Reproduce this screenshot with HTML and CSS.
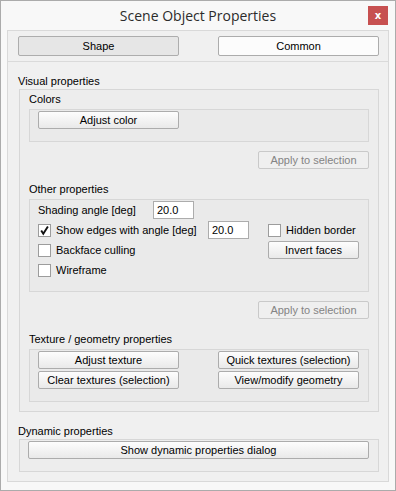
FILE: index.html
```html
<!DOCTYPE html>
<html lang="en">

<head>
    <meta charset="UTF-8">
    <title>Scene Object Properties</title>
    <link rel="stylesheet" href="styles.css">
</head>

<body>
    <div class="window">
        <div class="titlebar">
            <span></span>
            <span class="titlebar__text">Scene Object Properties</span>
            <button class="titlebar__close">x</button>
        </div>
        <div class="client">
            <div class="tabs">
                <button class="btn btn--tab btn--checked">Shape</button>
                <button class="btn btn--tab">Common</button>
            </div>
            <div class="main">
                <div class="caption caption--top">Visual properties</div>
                <div class="group group--visual">
                    <div class="caption caption--first">Colors</div>
                    <div class="group group--inner group--colors">
                        <button class="btn btn--wide">Adjust color</button>
                    </div>
                    <div class="apply-row">
                        <button class="btn btn--apply" disabled>Apply to selection</button>
                    </div>

                    <div class="caption caption--sub">Other properties</div>
                    <div class="group group--inner group--other">
                        <span class="cell cell--label">Shading angle [deg]</span>
                        <input class="field cell--field1" type="text" value="20.0">

                        <label class="check cell--edges"><span class="check__box"><svg width="11" height="11" viewBox="0 0 11 11"><path d="M2.2 5.4 L4.3 8.8 L8.9 1.4" fill="none" stroke="#111" stroke-width="1.9"/></svg></span>Show edges with angle [deg]</label>
                        <input class="field cell--field2" type="text" value="20.0">
                        <label class="check cell--hidden"><span class="check__box"></span>Hidden border</label>

                        <label class="check cell--backface"><span class="check__box"></span>Backface culling</label>
                        <button class="btn btn--invert cell--invert">Invert faces</button>

                        <label class="check cell--wire"><span class="check__box"></span>Wireframe</label>
                    </div>
                    <div class="apply-row">
                        <button class="btn btn--apply" disabled>Apply to selection</button>
                    </div>

                    <div class="caption caption--sub">Texture / geometry properties</div>
                    <div class="group group--inner group--texture">
                        <button class="btn">Adjust texture</button>
                        <button class="btn">Quick textures (selection)</button>
                        <button class="btn">Clear textures (selection)</button>
                        <button class="btn">View/modify geometry</button>
                    </div>
                </div>

                <div class="caption caption--top">Dynamic properties</div>
                <div class="group group--dynamic">
                    <button class="btn btn--full">Show dynamic properties dialog</button>
                </div>
            </div>
        </div>
    </div>
</body>
</html>
```

FILE: styles.css
```css
body {
    margin: 0;
    background-color: #ffffff;
}

.window {
    width: 396px;
    height: 491px;
    box-sizing: border-box;
    border: 1px solid #ababab;
    background-color: #f8f8f8;
    padding: 0 6px 8px 6px;
    display: flex;
    flex-direction: column;
    font-family: 'Liberation Sans', Arial, sans-serif;
    font-size: 11px;
    color: #000000;
}

.titlebar {
    height: 29px;
    flex-shrink: 0;
    display: grid;
    grid-template-columns: 1fr auto 1fr;
    margin: 0 -6px;
}

.titlebar__text {
    font-family: 'Open Sans', 'Noto Sans', sans-serif;
    font-size: 14px;
    line-height: 20px;
    padding-top: 5px;
    color: #2b2b2b;
}

.titlebar__close {
    justify-self: end;
    width: 20px;
    height: 19px;
    margin: 5px 7px 0 0;
    padding: 0;
    border: none;
    background-color: #c75050;
    color: #ffffff;
    font-family: 'DejaVu Sans', sans-serif;
    font-weight: bold;
    font-size: 10px;
    line-height: 17px;
}

.client {
    flex: 1;
    border: 1px solid #d9d9d9;
    background-color: #f0f0f0;
    display: flex;
    flex-direction: column;
}

.tabs {
    display: flex;
    justify-content: space-between;
    padding: 5px 9px 5px 10px;
    border-bottom: 1px solid #dadada;
}

.main {
    padding: 0 9px 0 10px;
}

/* captions above the group boxes */
.caption {
    line-height: 13px;
    box-sizing: border-box;
    padding-top: 1px;
}

.caption--top {
    margin-top: 11px;
    height: 16px;
    padding-top: 2px;
}

.caption--first {
    margin-top: 2px;
    height: 17px;
}

.caption--sub {
    margin-top: 13px;
    height: 17px;
}

.group {
    border: 1px solid #d7d7d7;
    background-color: rgba(0, 0, 0, 0.012);
    box-sizing: border-box;
}

.group--visual {
    margin-left: 1px;
    width: 360px;
    padding: 0 9px 9px 9px;
}

.group--inner {
    width: 340px;
}

.group--colors {
    padding: 1px 0 12px 8px;
}

.group--other {
    display: grid;
    grid-template-columns: 115px 55px 60px 1fr;
    grid-template-rows: repeat(4, 20px);
    align-items: center;
    padding: 0 0 11px 8px;
}

.group--texture {
    display: grid;
    grid-template-columns: 141px 141px;
    column-gap: 39px;
    row-gap: 2px;
    padding: 1px 0 12px 8px;
}

.group--dynamic {
    margin-left: 1px;
    width: 360px;
    padding: 1px 9px 12px 8px;
}

.apply-row {
    display: flex;
    justify-content: flex-end;
    width: 340px;
    margin-top: 9px;
}

/* push buttons */
.btn {
    height: 18px;
    width: 141px;
    padding: 0;
    box-sizing: border-box;
    border: 1px solid #acacac;
    border-radius: 2px;
    background: linear-gradient(#fdfdfd, #e9e9e9);
    font-family: 'Liberation Sans', Arial, sans-serif;
    font-size: 11px;
    line-height: 16px;
    color: #000000;
}

.btn--tab {
    width: 161px;
    height: 20px;
    line-height: 18px;
    background: #fcfcfc;
}

.btn--checked {
    background: #e6e6e6;
    border-color: #adadad;
}

.btn--apply {
    width: 111px;
    border-color: #c9c9c9;
    background: #efefef;
    color: #848484;
}

.btn--invert {
    width: 91px;
}

.btn--full {
    width: 341px;
}

.field {
    width: 41px;
    height: 18px;
    box-sizing: border-box;
    border: 1px solid #acacac;
    background-color: #ffffff;
    padding: 0 0 0 3px;
    font-family: 'Liberation Sans', Arial, sans-serif;
    font-size: 11px;
    color: #000000;
}

.check {
    display: flex;
    align-items: center;
    gap: 5px;
    white-space: nowrap;
}

.check__box {
    width: 13px;
    height: 13px;
    box-sizing: border-box;
    border: 1px solid #9c9c9c;
    background-color: #ffffff;
    display: flex;
    align-items: center;
    justify-content: center;
}

.cell--label {
    grid-column: 1;
    grid-row: 1;
}

.cell--field1 {
    grid-column: 2;
    grid-row: 1;
}

.cell--edges {
    grid-column: 1 / 3;
    grid-row: 2;
}

.cell--field2 {
    grid-column: 3;
    grid-row: 2;
}

.cell--hidden {
    grid-column: 4;
    grid-row: 2;
}

.cell--backface {
    grid-column: 1 / 3;
    grid-row: 3;
}

.cell--invert {
    grid-column: 4;
    grid-row: 3;
}

.cell--wire {
    grid-column: 1 / 3;
    grid-row: 4;
}
```
